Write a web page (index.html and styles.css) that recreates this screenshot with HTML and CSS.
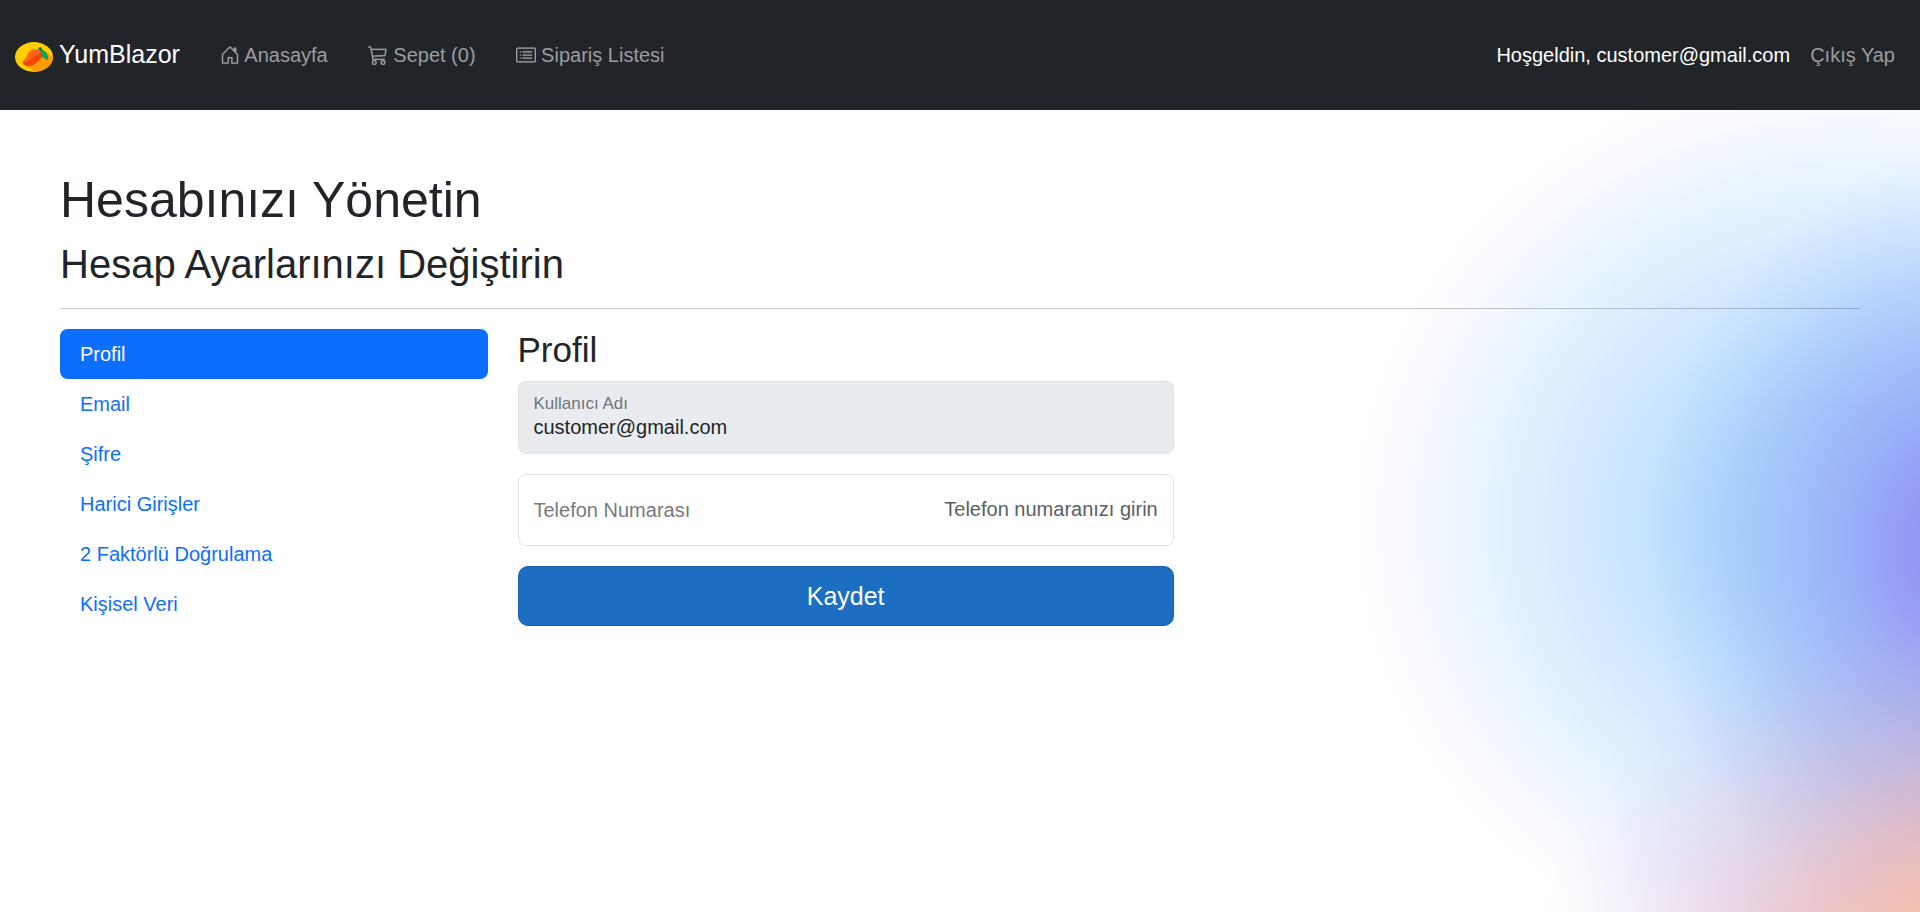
FILE: index.html
```html
<!DOCTYPE html>
<html lang="tr">
<head>
<meta charset="utf-8">
<title>YumBlazor - Profil</title>
<link rel="stylesheet" href="styles.css">
</head>
<body>
<nav class="navbar">
  <a class="brand">
    <svg class="logo" viewBox="0 0 38 30"><defs><clipPath id="disc"><ellipse cx="19" cy="15" rx="19" ry="15"/></clipPath></defs>
      <g clip-path="url(#disc)"><rect width="38" height="30" fill="#ffcd00"/><path d="M11 23 29 9 38 15V30H20z" fill="#ff9a00"/></g>
      <path d="M25 8c3 4 2 8-1 10-3 3-6 6-11 6-3 0-5-2-5-4 0-2 3-3 4-6 1-5 7-8 13-6z" fill="#ff641a"/>
      <path d="M27 9c2 4-1 8-4 10-3 3-6 5-10 5-3 0-5-2-5-4 6 1 8-4 12-6 3-1 5-2 7-5z" fill="#f44500"/>
      <path d="M26 8c4 0 8 4 7 10-4-1-8-4-7-10z" fill="#00a65a"/><path d="M23 6l3-1 2 4-3 0z" fill="#067a45"/>
    </svg>
    <span>YumBlazor</span>
  </a>
  <ul class="links">
    <li><a><svg class="icon" viewBox="0 0 16 16"><path d="M8.354 1.146a.5.5 0 0 0-.708 0l-6 6A.5.5 0 0 0 1.5 7.5v7a.5.5 0 0 0 .5.5h4.5a.5.5 0 0 0 .5-.5v-4h2v4a.5.5 0 0 0 .5.5H14a.5.5 0 0 0 .5-.5v-7a.5.5 0 0 0-.146-.354L13 5.793V2.5a.5.5 0 0 0-.5-.5h-1a.5.5 0 0 0-.5.5v1.293zM2.5 14V7.707l5.5-5.5 5.5 5.5V14H10v-4a.5.5 0 0 0-.5-.5h-3a.5.5 0 0 0-.5.5v4z"/></svg> Anasayfa</a></li>
    <li><a><svg class="icon" viewBox="0 0 16 16"><path d="M0 1.5A.5.5 0 0 1 .5 1H2a.5.5 0 0 1 .485.379L2.89 3H14.5a.5.5 0 0 1 .49.598l-1 5a.5.5 0 0 1-.465.401l-9.397.472L4.415 11H13a.5.5 0 0 1 0 1H4a.5.5 0 0 1-.491-.408L2.01 3.607 1.61 2H.5a.5.5 0 0 1-.5-.5M3.102 4l.84 4.479 9.144-.459L13.89 4zM5 12a2 2 0 1 0 0 4 2 2 0 0 0 0-4m7 0a2 2 0 1 0 0 4 2 2 0 0 0 0-4m-7 1a1 1 0 1 1 0 2 1 1 0 0 1 0-2m7 0a1 1 0 1 1 0 2 1 1 0 0 1 0-2"/></svg> Sepet (0)</a></li>
    <li><a><svg class="icon" viewBox="0 0 16 16"><path d="M14.5 3a.5.5 0 0 1 .5.5v9a.5.5 0 0 1-.5.5h-13a.5.5 0 0 1-.5-.5v-9a.5.5 0 0 1 .5-.5zm-13-1A1.5 1.5 0 0 0 0 3.500v9A1.5 1.5 0 0 0 1.500 14h13a1.500 1.500 0 0 0 1.500-1.500v-9A1.500 1.500 0 0 0 14.500 2z"/><path d="M5 8a.5.5 0 0 1 .5-.5h7a.5.5 0 0 1 0 1h-7A.5.5 0 0 1 5 8m0-2.500a.5.5 0 0 1 .5-.5h7a.5.5 0 0 1 0 1h-7a.5.5 0 0 1-.5-.5m0 5a.5.5 0 0 1 .5-.5h7a.5.5 0 0 1 0 1h-7a.5.5 0 0 1-.5-.5m-1-5a.5.5 0 1 1-1 0 .5.5 0 0 1 1 0M4 8a.5.5 0 1 1-1 0 .5.5 0 0 1 1 0m0 2.500a.5.5 0 1 1-1 0 .5.5 0 0 1 1 0"/></svg> Sipariş Listesi</a></li>
  </ul>
  <div class="account"><span class="hello">Hoşgeldin, customer@gmail.com</span><a>Çıkış Yap</a></div>
</nav>
<main class="page">
  <h1>Hesabınızı Yönetin</h1>
  <h2>Hesap Ayarlarınızı Değiştirin</h2>
  <hr>
  <div class="row">
    <ul class="pills">
      <li class="active">Profil</li>
      <li>Email</li>
      <li>Şifre</li>
      <li>Harici Girişler</li>
      <li>2 Faktörlü Doğrulama</li>
      <li>Kişisel Veri</li>
    </ul>
    <section class="profile">
      <h3>Profil</h3>
      <div class="field disabled"><span class="small-label">Kullanıcı Adı</span><span class="value">customer@gmail.com</span></div>
      <div class="field phone"><span class="label">Telefon Numarası</span><span class="hint">Telefon numaranızı girin</span></div>
      <button class="save">Kaydet</button>
    </section>
  </div>
</main>
</body>
</html>
```
FILE: styles.css
```css
* { box-sizing: border-box; }
html { font-size: 20px; }
body {
  margin: 0;
  height: 912px;
  overflow: hidden;
  font-family: "Liberation Sans", Arial, sans-serif;
  line-height: 1.5;
  color: #212529;
  background: #fff;
  display: flex;
  flex-direction: column;
}
ul { list-style: none; margin: 0; padding: 0; }
h1, h2, h3 { margin: 0 0 10px; font-weight: 400; line-height: 1.2; }
h1 { font-size: 50px; }
h2 { font-size: 40px; margin-bottom: 0; }
h3 { font-size: 35px; }

.navbar {
  height: 110px;
  flex: none;
  background: #212529;
  display: flex;
  align-items: center;
  padding: 0 25px 0 15px;
  white-space: nowrap;
}
.brand { display: flex; align-items: center; font-size: 25px; color: #fff; }
.logo { width: 38px; height: 30px; margin: 4px 6px 0 0; }
.links { display: flex; margin-left: 20px; }
.links a, .account a { color: #9b9d9e; }
.links a { padding: 0 20px; }
.icon { width: 20px; height: 20px; fill: currentColor; stroke: currentColor; stroke-width: .2; vertical-align: -2.5px; }
.account { margin-left: auto; display: flex; gap: 20px; }
.hello { color: #fff; }

.page {
  flex: 1;
  padding: 60px;
  background:
    radial-gradient(ellipse 480px 440px at 2010px 890px, rgb(250, 190, 158) 0%, rgba(247, 188, 162, .93) 22%, rgba(235, 175, 176, .72) 42%, rgba(215, 165, 195, .42) 61%, rgba(200, 165, 215, .18) 80%, rgba(190, 175, 235, .05) 93%, rgba(190, 180, 240, 0) 100%),
    radial-gradient(ellipse 330px 400px at 1980px 440px, #8f8cf2 0%, rgba(147, 152, 246, .97) 22%, rgba(148, 168, 247, .82) 40%, rgba(152, 181, 248, .58) 60%, rgba(160, 197, 250, .25) 82%, rgba(170, 210, 255, 0) 100%),
    radial-gradient(ellipse 485px 445px at 1850px 410px, #a9d3fa 0%, #b2d9fd 25%, #c4e4ff 43%, #d2e8ff 54%, #e0f0ff 68%, #eef6ff 82%, #f9fbff 93%, #fff 103%);
}
hr { height: 1px; border: 0; background: #212529; opacity: .25; margin: 20px 0; }
.row { display: flex; gap: 30px; }
.pills { width: 427.5px; }
.pills li { height: 50px; padding: 10px 20px; color: #0d6efd; }
.pills .active { background: #0d6efd; color: #fff; border-radius: 7.5px; }
.profile { width: 656.25px; display: flex; flex-direction: column; }
.field {
  height: 72.5px;
  margin-bottom: 20px;
  border: 1px solid #dee2e6;
  border-radius: 7.5px;
  padding: 0 15px;
  background: #fff;
}
.disabled { background: #e9ecef; display: flex; flex-direction: column; padding-top: 9px; }
.small-label { font-size: 17px; line-height: 25px; color: #6f757a; }
.value { line-height: 22px; }
.phone { display: flex; align-items: center; justify-content: space-between; color: #5a5f63; }
.label { color: #777a7d; }
.hint { margin-top: -1px; }
.save {
  height: 60px;
  border: 1px solid #1861ac;
  border-radius: 10px;
  background: #1b6ec2;
  color: #fff;
  font: 25px "Liberation Sans", Arial, sans-serif;
}
```
